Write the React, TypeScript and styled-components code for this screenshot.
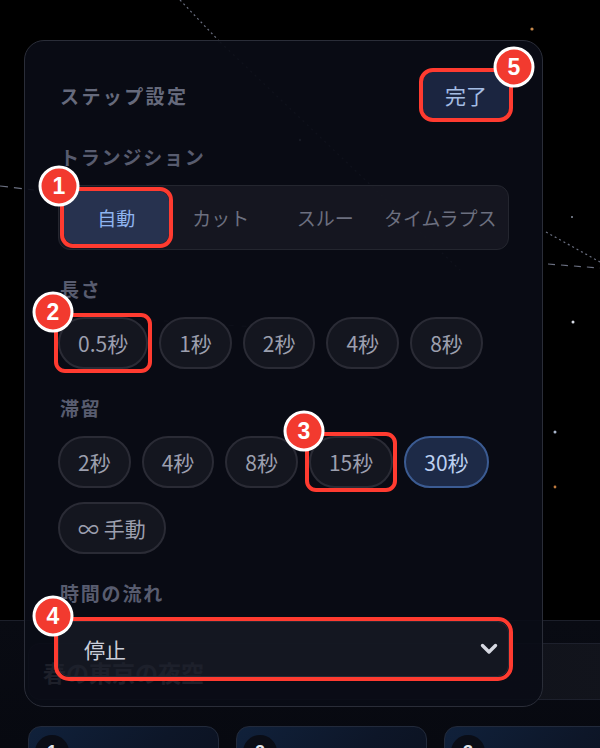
import React from "react";
import styled, { createGlobalStyle } from "styled-components";

const Global = createGlobalStyle`
  html, body { margin: 0; padding: 0; background: #000; }
  body { font-family: "Noto Sans CJK JP", "Noto Sans", sans-serif; }
  * { box-sizing: border-box; }
`;

const Screen = styled.div`
  position: relative;
  width: 600px;
  height: 748px;
  overflow: hidden;
  background: #000;
  display: flex;
  flex-direction: column;
`;

const Sky = styled.svg`
  position: absolute;
  inset: 0;
  width: 600px;
  height: 748px;
`;

const Spacer = styled.div`
  flex: 1;
`;

const Sheet = styled.div`
  position: relative;
  flex: 0 0 128px;
  height: 128px;
  border-top: 1px solid #1c1f2a;
  background: linear-gradient(180deg, #090b13 0%, #070910 100%);
  padding: 22px 0 0 28px;
  display: flex;
  flex-direction: column;
  gap: 26px;
`;

const TitleBox = styled.div`
  flex: 0 0 57px;
  width: 600px;
  height: 57px;
  border: 1px solid #1d202c;
  border-radius: 12px;
  padding-left: 14px;
  display: flex;
  align-items: center;
  font-size: 23px;
  font-weight: 700;
  color: #cfd2dc;
  background: linear-gradient(90deg, #0d0f18, #12141c);
`;

const Cards = styled.div`
  flex: 0 0 60px;
  display: flex;
  gap: 17px;
`;

const Card = styled.div`
  flex: 0 0 191px;
  height: 60px;
  border: 1.5px solid #222a3b;
  border-radius: 13px;
  background: linear-gradient(135deg, #10213b 0%, #0d1628 60%, #0b111f 100%);
  padding: 8px 0 0 6px;
`;

const CardNum = styled.div`
  width: 34px;
  height: 34px;
  border-radius: 50%;
  background: #0a0d16;
  color: #dfe3ea;
  font-family: "Liberation Sans", sans-serif;
  font-weight: 700;
  font-size: 18px;
  display: flex;
  align-items: center;
  justify-content: center;
`;

const Popover = styled.div`
  position: absolute;
  left: 24px;
  top: 40px;
  width: 519px;
  height: 667px;
  border: 1.5px solid #2a2d38;
  border-radius: 20px;
  background: rgba(10, 12, 22, 0.9);
  padding: 31px 33px 28px 33px;
  display: flex;
  flex-direction: column;
  gap: 29px;
`;

const Header = styled.div`
  display: flex;
  align-items: center;
  justify-content: space-between;
  height: 46px;
`;

const Heading = styled.div`
  font-size: 19px;
  font-weight: 700;
  letter-spacing: 2.4px;
  color: #666a7c;
  padding-left: 2px;
`;

const DoneButton = styled.button`
  width: 86px;
  height: 46px;
  border: none;
  border-radius: 10px;
  background: #1b2540;
  color: #a4bde4;
  font-family: inherit;
  font-size: 21px;
  padding: 0;
`;

const Section = styled.div`
  display: flex;
  flex-direction: column;
  gap: 18px;
`;

const Label = styled.div`
  font-size: 19px;
  line-height: 20px;
  font-weight: 700;
  letter-spacing: 1.8px;
  color: #585c6f;
  padding-left: 2px;
`;

const Segmented = styled.div`
  display: grid;
  grid-template-columns: 1fr 1fr 1fr 1.2fr;
  height: 65px;
  padding: 5px;
  border: 1px solid #24262f;
  border-radius: 12px;
  background: rgba(24, 25, 34, 0.85);
`;

const Segment = styled.div<{ $active?: boolean }>`
  display: flex;
  align-items: center;
  justify-content: center;
  height: 100%;
  border-radius: 10px;
  font-size: 19px;
  white-space: nowrap;
  color: ${(p) => (p.$active ? "#8fb4ef" : "#6c6f7f")};
  background: ${(p) => (p.$active ? "#27324f" : "transparent")};
`;

const ChipRow = styled.div`
  display: flex;
  flex-wrap: wrap;
  gap: 14px 11px;
`;

const Chip = styled.div<{ $active?: boolean }>`
  height: 52px;
  padding: 0 18px;
  border-radius: 26px;
  display: inline-flex;
  align-items: center;
  justify-content: center;
  font-size: 21px;
  white-space: nowrap;
  border: 2px solid ${(p) => (p.$active ? "#3b5b92" : "#2a2b35")};
  background: ${(p) => (p.$active ? "#1d2a47" : "rgba(22, 23, 32, 0.9)")};
  color: ${(p) => (p.$active ? "#bcd0f0" : "#9c9fae")};
`;

const Select = styled.div`
  height: 56px;
  border-radius: 12px;
  border: 1px solid #262935;
  background: rgba(30, 32, 44, 0.55);
  padding: 0 10px 0 25px;
  display: flex;
  align-items: center;
  justify-content: space-between;
  font-size: 21px;
  color: #cbced9;
`;

const Mark = styled.div<{ $block?: boolean; $radius?: number }>`
  position: relative;
  display: ${(p) => (p.$block ? "block" : "inline-flex")};
  &::after {
    content: "";
    position: absolute;
    inset: -4px;
    border: 4px solid #ff3b30;
    border-radius: ${(p) => p.$radius ?? 12}px;
    pointer-events: none;
  }
`;

const Badge = styled.div<{ $right?: boolean }>`
  position: absolute;
  top: -5px;
  ${(p) => (p.$right ? "right: -5px;" : "left: -5px;")}
  transform: translate(${(p) => (p.$right ? "50%" : "-50%")}, -50%);
  width: 41px;
  height: 41px;
  border-radius: 50%;
  background: #f23a2f;
  border: 3px solid #fff;
  color: #fff;
  font-family: "Liberation Sans", "Roboto", sans-serif;
  font-weight: 700;
  font-size: 23px;
  display: flex;
  align-items: center;
  justify-content: center;
  z-index: 2;
`;

const Chevron = () => (
  <svg width="18" height="12" viewBox="0 0 18 12">
    <path d="M2.5 2.5 L9 9 L15.5 2.5" fill="none" stroke="#d6d8e1" strokeWidth="3.4" strokeLinecap="round" strokeLinejoin="round" />
  </svg>
);

const SkyDrawing = () => (
  <Sky viewBox="0 0 600 748">
    <g stroke="#6a6f80" strokeWidth="1.2" fill="none">
      <path d="M180 0 L220 42" strokeDasharray="2 3" />
      <path d="M220 42 L460 270" strokeDasharray="2 4" opacity="0.6" />
      <path d="M546 232 L600 262" strokeDasharray="2 3" />
      <path d="M548 264 L600 268" strokeDasharray="7 6" />
      <path d="M0 186 L34 190" strokeDasharray="8 6" />
      <path d="M60 314 L300 330" strokeDasharray="5 8" opacity="0.4" />
    </g>
    <circle cx="532" cy="29" r="1.6" fill="#c88a4c" />
    <circle cx="573" cy="322" r="1.5" fill="#d8dce6" />
    <circle cx="555" cy="432" r="1.5" fill="#a9b6cc" />
    <circle cx="555" cy="487" r="1.4" fill="#c07a3e" />
    <circle cx="572" cy="217" r="1" fill="#8890a0" />
    <circle cx="300" cy="140" r="1.2" fill="#8890a0" />
    <circle cx="90" cy="600" r="1" fill="#8890a0" />
  </Sky>
);

const lengths = ["1秒", "2秒", "4秒", "8秒"];
const dwellsBefore = ["2秒", "4秒", "8秒"];

export default function App() {
  return (
    <>
      <Global />
      <Screen>
        <SkyDrawing />
        <Spacer />
        <Sheet>
          <TitleBox>春の東京の夜空</TitleBox>
          <Cards>
            <Card><CardNum>1</CardNum></Card>
            <Card><CardNum>2</CardNum></Card>
            <Card><CardNum>3</CardNum></Card>
          </Cards>
        </Sheet>

        <Popover>
          <Header>
            <Heading>ステップ設定</Heading>
            <Mark $radius={14}>
              <DoneButton>完了</DoneButton>
              <Badge $right>5</Badge>
            </Mark>
          </Header>

          <Section>
            <Label>トランジション</Label>
            <Segmented>
              <Mark $block $radius={13}>
                <Segment $active>自動</Segment>
                <Badge>1</Badge>
              </Mark>
              <Segment>カット</Segment>
              <Segment>スルー</Segment>
              <Segment>タイムラプス</Segment>
            </Segmented>
          </Section>

          <Section>
            <Label>長さ</Label>
            <ChipRow>
              <Mark $radius={11}>
                <Chip>0.5秒</Chip>
                <Badge>2</Badge>
              </Mark>
              {lengths.map((l) => (
                <Chip key={l}>{l}</Chip>
              ))}
            </ChipRow>
          </Section>

          <Section>
            <Label>滞留</Label>
            <ChipRow>
              {dwellsBefore.map((d) => (
                <Chip key={d}>{d}</Chip>
              ))}
              <Mark $radius={11}>
                <Chip>15秒</Chip>
                <Badge>3</Badge>
              </Mark>
              <Chip $active>30秒</Chip>
              <Chip>∞ 手動</Chip>
            </ChipRow>
          </Section>

          <Section>
            <Label>時間の流れ</Label>
            <Mark $block $radius={15}>
              <Select>
                <span>停止</span>
                <Chevron />
              </Select>
              <Badge>4</Badge>
            </Mark>
          </Section>
        </Popover>
      </Screen>
    </>
  );
}
